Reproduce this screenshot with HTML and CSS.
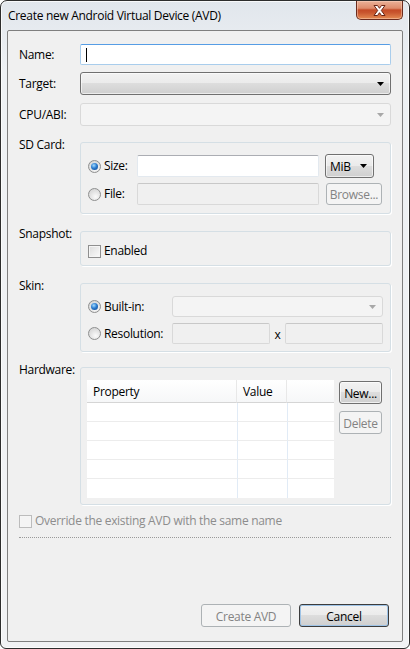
FILE: index.html
```html
<!DOCTYPE html>
<html lang="en">
<head>
  <meta charset="UTF-8" />
  <meta name="viewport" content="width=device-width, initial-scale=1.0"/>
  <title>Create new Android Virtual Device (AVD)</title>
  <link rel="stylesheet" href="styles.css">
</head>
<body>

  <div class="window">
    <div class="titlebar">
      <span class="title">Create new Android Virtual Device (AVD)</span>
      <div class="close-btn">
        <svg width="13" height="11" viewBox="0 0 13 11">
          <polygon points="1,0.5 4.5,0.5 6.5,3.3 8.5,0.5 12,0.5 8.3,5.5 12,10.5 8.5,10.5 6.5,7.7 4.5,10.5 1,10.5 4.7,5.5" fill="#fff" stroke="#6a2414" stroke-width="1" stroke-linejoin="round"/>
        </svg>
      </div>
    </div>

    <div class="client">

      <div class="row row-name">
        <div class="row-label">Name:</div>
        <div class="textbox focused"><span class="caret"></span></div>
      </div>

      <div class="row row-target">
        <div class="row-label">Target:</div>
        <div class="combo">
          <span class="combo-text"></span>
          <svg class="arrow" width="7" height="4" viewBox="0 0 7 4"><polygon points="0,0 7,0 3.5,4" fill="#000"/></svg>
        </div>
      </div>

      <div class="row row-cpu">
        <div class="row-label">CPU/ABI:</div>
        <div class="combo disabled">
          <span class="combo-text"></span>
          <svg class="arrow" width="7" height="4" viewBox="0 0 7 4"><polygon points="0,0 7,0 3.5,4" fill="#a8a8a8"/></svg>
        </div>
      </div>

      <div class="row group-row row-sd">
        <div class="row-label">SD Card:</div>
        <div class="group sd-group">
          <div class="option"><span class="radio checked"></span>Size:</div>
          <div class="textbox"></div>
          <div class="combo unit-combo">
            <span class="combo-text">MiB</span>
            <svg class="arrow" width="7" height="4" viewBox="0 0 7 4"><polygon points="0,0 7,0 3.5,4" fill="#000"/></svg>
          </div>
          <div class="option"><span class="radio"></span>File:</div>
          <div class="textbox disabled"></div>
          <div class="btn disabled browse-btn">Browse...</div>
        </div>
      </div>

      <div class="row group-row row-snapshot">
        <div class="row-label">Snapshot:</div>
        <div class="group snapshot-group">
          <div class="option"><span class="checkbox"></span>Enabled</div>
        </div>
      </div>

      <div class="row group-row row-skin">
        <div class="row-label">Skin:</div>
        <div class="group skin-group">
          <div class="option"><span class="radio checked"></span>Built-in:</div>
          <div class="combo disabled">
            <span class="combo-text"></span>
            <svg class="arrow" width="7" height="4" viewBox="0 0 7 4"><polygon points="0,0 7,0 3.5,4" fill="#a8a8a8"/></svg>
          </div>
          <div class="option"><span class="radio"></span>Resolution:</div>
          <div class="resolution">
            <div class="textbox disabled"></div>
            <span class="times">x</span>
            <div class="textbox disabled"></div>
          </div>
        </div>
      </div>

      <div class="row group-row row-hardware">
        <div class="row-label">Hardware:</div>
        <div class="group hardware-group">
          <div class="table">
            <div class="th">Property</div>
            <div class="th">Value</div>
            <div class="th"></div>
            <div class="td"></div><div class="td"></div><div class="td"></div>
            <div class="td"></div><div class="td"></div><div class="td"></div>
            <div class="td"></div><div class="td"></div><div class="td"></div>
            <div class="td"></div><div class="td"></div><div class="td"></div>
            <div class="td last"></div><div class="td last"></div><div class="td last"></div>
          </div>
          <div class="side-buttons">
            <div class="btn small-btn">New...</div>
            <div class="btn small-btn disabled">Delete</div>
          </div>
        </div>
      </div>

      <div class="option override"><span class="checkbox disabled"></span>Override the existing AVD with the same name</div>

      <div class="separator"></div>

      <div class="button-bar">
        <div class="btn dialog-btn disabled">Create AVD</div>
        <div class="btn dialog-btn default">Cancel</div>
      </div>

    </div>
  </div>

</body>
</html>
```

FILE: styles.css
```css
* {
  box-sizing: border-box;
}

body {
  margin: 0;
  font-family: "Open Sans", "Noto Sans", sans-serif;
  font-size: 12px;
  letter-spacing: -0.3px;
  color: #000;
  background: #fff;
}

/* window frame */
.window {
  width: 410px;
  height: 649px;
  border: 1px solid #2d2d2d;
  border-radius: 7px 7px 6px 6px;
  background: linear-gradient(#e1e6ec, #eef1f4 70px, #f1f2f4);
  box-shadow: inset 0 0 0 1px rgba(255, 255, 255, 0.75);
  display: flex;
  flex-direction: column;
}

.titlebar {
  height: 29px;
  display: flex;
  justify-content: space-between;
  align-items: flex-start;
  padding-left: 7px;
}

.title {
  margin-top: 7px;
  line-height: 16px;
}

.close-btn {
  width: 47px;
  height: 19px;
  margin-right: 6px;
  border: 1px solid #6b2b1d;
  border-top: none;
  border-radius: 0 0 5px 5px;
  background: linear-gradient(#eab198, #de8c6c 40%, #c44a26 50%, #c9562f 65%, #e48b52);
  box-shadow: inset 0 0 0 1px rgba(255, 220, 200, 0.45);
  display: flex;
  align-items: center;
  justify-content: center;
}

.client {
  flex: 1;
  margin: 0 6px 6px;
  border: 1px solid #7f7f7f;
  border-radius: 2px;
  background: #f0f0f0;
  padding: 13px 11px 14px 11px;
  display: flex;
  flex-direction: column;
}

/* form rows */
.row {
  display: flex;
  align-items: center;
}

.row-label {
  width: 61px;
  flex-shrink: 0;
  line-height: 16px;
}

.row > :last-child {
  flex: 1;
}

.group-row {
  align-items: flex-start;
}

.group-row .row-label {
  margin-top: -5px;
}

.row-target { margin-top: 7px; }
.row-cpu { margin-top: 8px; }
.row-sd { margin-top: 16px; }
.row-snapshot { margin-top: 17px; }
.row-skin { margin-top: 17px; }
.row-hardware { margin-top: 15px; }

/* controls */
.textbox {
  height: 21px;
  background: #fff;
  border: 1px solid #e3e9ef;
  border-top-color: #abadb3;
  border-radius: 2px;
  display: flex;
  align-items: center;
  padding-left: 5px;
}

.textbox.focused {
  border-color: #a9cdec;
  border-top-color: #569de5;
}

.textbox.disabled {
  background: #f0f0f0;
  border-color: #d9d9d9;
  border-top-color: #c8c8c8;
}

.caret {
  width: 1px;
  height: 14px;
  background: #000;
}

.combo {
  height: 23px;
  border: 1px solid #707070;
  border-radius: 3px;
  background: linear-gradient(#f2f2f2, #ebebeb 48%, #dddddd 50%, #cfcfcf);
  box-shadow: inset 0 0 0 1px rgba(255, 255, 255, 0.6);
  display: flex;
  align-items: center;
  justify-content: space-between;
  padding: 0 6px 0 4px;
}

.combo.disabled {
  border-color: #d9d9d9;
  background: #f4f4f4;
  box-shadow: none;
}

.arrow {
  display: block;
}

.btn {
  height: 23px;
  border: 1px solid #707070;
  border-radius: 3px;
  background: linear-gradient(#f2f2f2, #ebebeb 48%, #dddddd 50%, #cfcfcf);
  box-shadow: inset 0 0 0 1px rgba(255, 255, 255, 0.7);
  display: flex;
  align-items: center;
  justify-content: center;
  padding-top: 1px;
}

.btn.disabled {
  color: #838383;
  border-color: #adb2b5;
  background: #f4f4f4;
  box-shadow: none;
}

.btn.default {
  border-color: #3c3c3c;
  box-shadow: inset 0 0 0 1px #9ec3e6;
}

.option {
  display: flex;
  align-items: center;
  line-height: 16px;
  white-space: nowrap;
}

.radio {
  width: 13px;
  height: 13px;
  margin-right: 3px;
  border-radius: 50%;
  border: 1px solid #8e8f8f;
  background: radial-gradient(circle at 60% 70%, #fbfbfb, #e1e1e1 55%, #cfcfcf);
  display: flex;
  align-items: center;
  justify-content: center;
  flex-shrink: 0;
}

.radio.checked::after {
  content: '';
  width: 7px;
  height: 7px;
  border-radius: 50%;
  background: radial-gradient(circle at 40% 35%, #a6dcff, #2c7dd0 45%, #0b3e86);
}

.checkbox {
  width: 13px;
  height: 13px;
  margin-right: 3px;
  border: 1px solid #8f8f8f;
  background: linear-gradient(135deg, #dcdcdc, #fbfbfb);
  box-shadow: inset 0 0 0 1px #f5f5f5;
  flex-shrink: 0;
}

.checkbox.disabled {
  border-color: #bcbcbc;
  background: #f4f4f4;
}

/* group boxes */
.group {
  border: 1px solid #d5dfe5;
  border-radius: 3px;
  box-shadow: 1px 1px 0 #fff;
}

.sd-group {
  display: grid;
  grid-template-columns: 49px 182px auto;
  grid-template-rows: 24px 22px;
  row-gap: 5px;
  align-items: center;
  padding: 11px 7px 8px 7px;
}

.sd-group .textbox {
  height: 22px;
}

.unit-combo {
  width: 49px;
  height: 24px;
  margin-left: 6px;
  padding-left: 4px;
}

.browse-btn {
  width: 56px;
  height: 22px;
  margin-left: 7px;
}

.snapshot-group {
  padding: 11px 7px 6px 7px;
}

.skin-group {
  display: grid;
  grid-template-columns: 84px 1fr;
  grid-template-rows: 21px 21px;
  row-gap: 6px;
  align-items: center;
  padding: 12px 7px 7px 7px;
}

.skin-group .combo {
  height: 21px;
}

.resolution {
  display: flex;
  align-items: center;
}

.resolution .textbox {
  flex: 1;
}

.times {
  width: 15px;
  text-align: center;
  padding-top: 2px;
}

.hardware-group {
  display: flex;
  align-items: flex-start;
  padding: 12px 6px 6px 6px;
}

/* property table */
.table {
  width: 247px;
  display: grid;
  grid-template-columns: 150px 50px 47px;
  grid-template-rows: 23px repeat(5, 19px);
  background: #fff;
}

.th {
  background: linear-gradient(#ffffff, #f6f7f8);
  border-bottom: 1px solid #d5d5d5;
  border-right: 1px solid #e8e8e8;
  padding-left: 6px;
  line-height: 23px;
}

.th:nth-child(3) {
  border-right: none;
}

.td {
  border-bottom: 1px solid #ececec;
}

.td:nth-child(3n+2),
.td:nth-child(3n) {
  border-left: 1px solid #e1ebf6;
}

.td.last {
  border-bottom: none;
}

.side-buttons {
  margin-left: 5px;
  margin-top: 1px;
  display: flex;
  flex-direction: column;
  gap: 7px;
}

.small-btn {
  width: 43px;
}

/* bottom area */
.override {
  margin-top: 8px;
  color: #8d8d8d;
}

.separator {
  margin-top: 8px;
  border-top: 1px dotted #9a9a9a;
}

.button-bar {
  margin-top: auto;
  display: flex;
  justify-content: flex-end;
  gap: 8px;
  padding-right: 2px;
}

.dialog-btn {
  width: 90px;
}
```
